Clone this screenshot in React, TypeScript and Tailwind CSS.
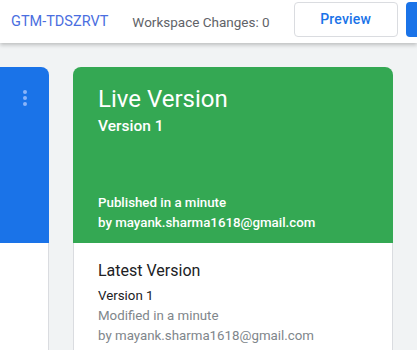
export default function App() {
  return (
    <div
      className="w-[417px] h-[350px] overflow-hidden bg-[#f1f3f4] text-[#202124]"
      style={{ fontFamily: "Roboto, 'Liberation Sans', sans-serif" }}
    >
      <header className="relative z-10 h-[43px] bg-white flex items-center pl-[11px] gap-6 shadow-[0_2px_4px_rgba(0,0,0,0.22)] whitespace-nowrap">
        <span className="text-[14.5px] leading-5 text-[#4a6ee0]">GTM-TDSZRVT</span>
        <span className="text-[13.5px] leading-5 text-[#5f6368]">Workspace Changes: 0</span>
        <div className="flex gap-2 self-start mt-[2px] shrink-0">
          <button className="w-[104px] h-[35px] rounded border border-[#dadce0] bg-white text-[14px] font-medium text-[#1a73e8] tracking-[0.2px]">
            Preview
          </button>
          <button className="w-[100px] h-[35px] rounded bg-[#1a73e8]" aria-label="Submit" />
        </div>
      </header>

      <main className="flex gap-6 pt-6">
        {/* left card, mostly off screen */}
        <div className="w-[49px] shrink-0 flex flex-col">
          <div className="h-[176px] bg-[#1a73e8] rounded-tr-lg flex justify-end pr-[22px] pt-[23px]">
            <div className="flex flex-col gap-[2px]">
              <span className="w-[4px] h-[4px] rounded-full bg-[#8ab4f8]" />
              <span className="w-[4px] h-[4px] rounded-full bg-[#8ab4f8]" />
              <span className="w-[4px] h-[4px] rounded-full bg-[#8ab4f8]" />
            </div>
          </div>
          <div className="h-[200px] bg-white border-r border-[#dadce0]" />
        </div>

        {/* live version card */}
        <div className="w-[320px] shrink-0 flex flex-col">
          <div className="h-[176px] bg-[#34a853] rounded-t-lg text-white pl-[25px] pt-[16px] flex flex-col">
            <h2 className="text-[24px] leading-8">Live Version</h2>
            <p className="text-[15.5px] leading-5 font-medium mt-px">Version 1</p>
            <div className="mt-auto pb-[10px] text-[13.3px] leading-5 font-medium">
              <p>Published in a minute</p>
              <p>by mayank.sharma1618@gmail.com</p>
            </div>
          </div>
          <div className="h-[200px] bg-white border-x border-[#dadce0] pl-[24px] pt-4">
            <h3 className="text-[16px] leading-6">Latest Version</h3>
            <p className="text-[13.3px] leading-5 mt-[3px]">Version 1</p>
            <p className="text-[13.3px] leading-5 text-[#80868b]">Modified in a minute</p>
            <p className="text-[13.3px] leading-5 text-[#80868b]">by mayank.sharma1618@gmail.com</p>
          </div>
        </div>
      </main>
    </div>
  );
}
